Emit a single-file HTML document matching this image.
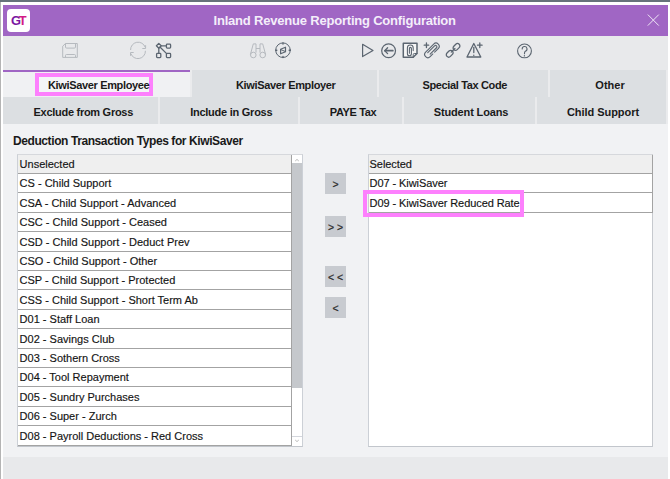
<!DOCTYPE html>
<html><head><meta charset="utf-8">
<style>
*{margin:0;padding:0;box-sizing:border-box}
html,body{width:670px;height:479px;overflow:hidden;background:#fff;font-family:"Liberation Sans",sans-serif}
.a{position:absolute}
.tb{position:absolute;background:#dcdfe2;font-weight:bold;font-size:11px;color:#1a1a1a;text-align:center;line-height:31px;letter-spacing:-0.35px;white-space:nowrap}
.row{position:absolute;left:0;width:274px;height:19.4px;border-bottom:1px solid #a3a3a3;font-size:11px;color:#141414;-webkit-text-stroke:0.15px #141414;line-height:18px;padding-top:0.4px;padding-left:1.6px;white-space:nowrap;overflow:hidden}
.btn{position:absolute;left:325px;width:21px;height:21px;background:#c8cbd0;font-size:10.5px;font-weight:normal;-webkit-text-stroke:0.2px #2a2a2a;color:#2a2a2a;text-align:center;line-height:23px}
</style></head><body>
<!-- frame -->
<div class="a" style="left:0;top:0;width:670px;height:2px;background:#66727b"></div>
<div class="a" style="left:0;top:2px;width:1px;height:477px;background:#b4b4b4"></div>
<!-- title bar -->
<div class="a" style="left:3px;top:5px;width:665px;height:31px;background:#a066c4"></div>
<div class="a" style="left:7px;top:9px;width:23px;height:23px;background:#fff;border-radius:4px"></div>
<div class="a" style="left:10.6px;top:13.2px;font-size:13.5px;font-weight:bold;line-height:16px;letter-spacing:-2.3px;transform:scaleX(0.95);transform-origin:0 0"><span style="color:#7a17a3">G</span><span style="color:#d21a86">T</span></div>
<div class="a" style="left:213.5px;top:13px;width:260px;font-size:13px;font-weight:bold;color:#f4eefa;line-height:16px;letter-spacing:-0.2px;white-space:nowrap">Inland Revenue Reporting Configuration</div>
<svg class="a" style="left:640px;top:8px" width="24" height="24" viewBox="640 8 24 24"><path d="M647.8,14.6 L658.8,25.6 M658.8,14.6 L647.8,25.6" stroke="#efe6f5" stroke-width="1"/></svg>
<!-- toolbar -->
<div class="a" style="left:3px;top:36px;width:665px;height:34px;background:#e8e9eb"></div>
<svg class="a" style="left:0;top:36px" width="670" height="34" viewBox="0 36 670 34">
<g fill="none" stroke="#b6babf" stroke-width="1" stroke-linejoin="round">
 <path d="M62.7,46.2 L65.5,43.5 L77.3,43.5 L77.3,57.4 L62.7,57.4 Z"/>
 <path d="M65.5,43.5 V47 Q65.5,48.1 66.6,48.1 H74.4 Q75.5,48.1 75.5,47 V43.5"/>
 <path d="M65.5,57.3 V55.5 Q65.5,54.5 66.5,54.5 H74.5 Q75.5,54.5 75.5,55.5 V57.3"/>
 <path d="M130.6,50 A7.5,7.5 0 0 1 145.2,47.3"/>
 <path d="M142.3,48.5 H145.6 V45.2"/>
 <path d="M145.4,50.8 A7.5,7.5 0 0 1 130.8,53.5"/>
 <path d="M133.7,52.5 H130.5 V55.8"/>
 <path d="M250.4,54.5 L253.3,43.9 H256 V52.6"/>
 <path d="M265.6,54.5 L262.7,43.9 H260 V52.6"/>
 <path d="M256,48.5 H260"/>
 <circle cx="253.3" cy="55" r="2.8"/>
 <circle cx="262.7" cy="55" r="2.8"/>
</g>
<g fill="none" stroke="#5b6570" stroke-width="1.3" stroke-linejoin="round" stroke-linecap="round">
 <path d="M158.8,43.4 L161.2,45.8 L158.8,48.2 L156.4,45.8 Z"/>
 <rect x="166.4" y="44.1" width="4.2" height="4" rx="0.8"/>
 <rect x="156.6" y="53.4" width="4.2" height="4.2" rx="0.8"/>
 <rect x="166.4" y="53.4" width="4.2" height="4.2" rx="0.8"/>
 <path d="M161.2,45.8 H166.4 M158.8,48.2 V53.4 M160.2,47.3 L166.6,53.6"/>
 <circle cx="283" cy="50.2" r="7.3" stroke-width="1"/>
 <path d="M280.6,49.2 L285.5,47.2 V51.8 L280.6,53.8 Z" stroke-width="1.2"/>
 <path d="M280.8,49.6 L285.3,51.5" stroke-width="1"/>
 <path d="M283,42.9 V44 M283,56.4 V57.5 M275.7,50.2 H276.8 M289.2,50.2 H290.3" stroke-width="1.4"/>
 <path d="M362.6,44.3 L373,50.4 L362.6,56.6 Z" stroke-width="1.2"/>
 <circle cx="388.6" cy="50.7" r="6.9" stroke-width="1.2"/>
 <path d="M385,50.7 H392.8" stroke-width="1.8"/>
 <path d="M387.6,47.8 L384.8,50.7 L387.6,53.6" stroke-width="1.3"/>
 <path d="M403.3,43.3 H417 V53.5 L413.2,57.3 H403.3 Z" stroke-width="1.5" fill="#f6f6f6"/>
 <path d="M413.2,57.3 V54.6 Q413.2,53.5 414.3,53.5 H417" stroke-width="1"/>
 <path d="M413.2,50.6 V47.9 A2.9,2.9 0 0 0 407.4,47.9 V53.8 A2,2 0 0 0 411.4,53.8 V48.4 A1,1 0 0 0 409.4,48.4 V53.2" stroke-width="1.1"/>
 <path d="M424.2,45.2 H428.7 M426.45,42.9 V47.5" stroke-width="1.3"/>
 <g transform="translate(432,50.3) rotate(45)">
  <path d="M3.2,-0.5 V-5.6 A3.2,3.2 0 0 0 -3.2,-5.6 V5.8 A3.2,3.2 0 0 0 3.2,5.8 V2 M1.4,4 V-5 A1.4,1.4 0 0 0 -1.4,-5 V4.6" stroke-width="1.1"/>
 </g>
 <g transform="translate(453.1,50.3) rotate(-45)">
  <rect x="-8.6" y="-2.4" width="7.6" height="4.8" rx="2.4" stroke-width="1.3"/>
  <rect x="1" y="-2.4" width="7.6" height="4.8" rx="2.4" stroke-width="1.3"/>
  <path d="M-2.6,0 H2.6" stroke-width="1.2"/>
 </g>
 <path d="M473.8,43.5 L480.8,57 H467 Z" stroke-width="1.3"/>
 <path d="M473.8,47.5 V52.5" stroke-width="1.3"/>
 <path d="M473.8,55 V55.4" stroke-width="1.2"/>
 <path d="M477.5,45.2 H482.1 M479.8,42.9 V47.5" stroke-width="1.3"/>
 <circle cx="524.5" cy="50.9" r="6.9" stroke-width="1.1"/>
 <path d="M522.2,49 A2.4,2.4 0 1 1 525.4,51.2 Q524.5,51.9 524.5,53 V53.8" stroke-width="1.1"/>
 <path d="M524.4,55.5 V56" stroke-width="1.2"/>
</g>
</svg>
<!-- tabs container -->
<div class="a" style="left:3px;top:70px;width:665px;height:54px;background:#eaebed"></div>
<div class="a" style="left:3px;top:70px;width:187px;height:27px;background:#f0f1f3"></div>
<div class="a" style="left:3px;top:70px;width:187px;height:2px;background:#a066c4"></div>
<div class="a" style="left:35.3px;top:73.3px;width:118px;height:23px;border:4px solid #fd80fd;background:#f4f5f7"></div>
<div class="a" style="left:48px;top:73px;font-weight:bold;font-size:11px;color:#1a1a1a;line-height:24px;letter-spacing:-0.35px;white-space:nowrap">KiwiSaver Employee</div>
<div class="tb" style="left:191.5px;top:70px;width:185.5px;height:27px;padding-left:3px">KiwiSaver Employer</div>
<div class="tb" style="left:379px;top:70px;width:169px;height:27px;padding-left:2.5px">Special Tax Code</div>
<div class="tb" style="left:550px;top:70px;width:116px;height:27px;padding-left:4px;letter-spacing:0">Other</div>
<div class="tb" style="left:3px;top:97px;width:154.5px;height:27px;padding-left:6px;letter-spacing:-0.28px">Exclude from Gross</div>
<div class="tb" style="left:159.5px;top:97px;width:138.5px;height:27px;padding-left:5px;letter-spacing:-0.25px">Include in Gross</div>
<div class="tb" style="left:300px;top:97px;width:102px;height:27px;padding-left:4px">PAYE Tax</div>
<div class="tb" style="left:404px;top:97px;width:131px;height:27px;padding-left:3px;letter-spacing:-0.15px">Student Loans</div>
<div class="tb" style="left:537px;top:97px;width:129px;height:27px;padding-left:3px;letter-spacing:-0.05px">Child Support</div>
<!-- content -->
<div class="a" style="left:3px;top:124px;width:665px;height:332.5px;background:#f1f2f4"></div>
<div class="a" style="left:3px;top:456.5px;width:665px;height:22.5px;background:#e8e9eb"></div>
<div class="a" style="left:13px;top:134px;font-size:12px;font-weight:bold;color:#1a1a1a;line-height:14px;letter-spacing:-0.41px;white-space:nowrap">Deduction Transaction Types for KiwiSaver</div>

<!-- left list -->
<div class="a" style="left:17px;top:153.6px;width:286px;height:293px;background:#fff;border:1px solid;border-color:#d6d8dc #ccd0d6 #c2c6cc #ccd0d6">
  <div class="row" style="top:0;background:#efefef;padding-top:0">Unselected</div>
  <div class="row" style="top:19.4px">CS - Child Support</div>
  <div class="row" style="top:38.8px">CSA - Child Support - Advanced</div>
  <div class="row" style="top:58.2px">CSC - Child Support - Ceased</div>
  <div class="row" style="top:77.6px">CSD - Child Support - Deduct Prev</div>
  <div class="row" style="top:97px">CSO - Child Support - Other</div>
  <div class="row" style="top:116.4px">CSP - Child Support - Protected</div>
  <div class="row" style="top:135.8px">CSS - Child Support - Short Term Ab</div>
  <div class="row" style="top:155.2px">D01 - Staff Loan</div>
  <div class="row" style="top:174.6px">D02 - Savings Club</div>
  <div class="row" style="top:194px">D03 - Sothern Cross</div>
  <div class="row" style="top:213.4px">D04 - Tool Repayment</div>
  <div class="row" style="top:232.8px">D05 - Sundry Purchases</div>
  <div class="row" style="top:252.2px">D06 - Super - Zurch</div>
  <div class="row" style="top:271.6px">D08 - Payroll Deductions - Red Cross</div>
  <div class="a" style="left:273px;top:0;width:1px;height:291px;background:#a3a3a3"></div>
  <!-- scrollbar -->
  <div class="a" style="left:274px;top:0;width:10px;height:291px;background:#fff"></div>
  <div class="a" style="left:274px;top:8.7px;width:10px;height:225.2px;background:#c5c8cc"></div>
  <div class="a" style="left:274px;top:281.4px;width:10px;height:1px;background:#d3d6dc"></div>
  <svg class="a" style="left:275px;top:2px" width="8" height="6" viewBox="0 0 8 6"><path d="M2.2 4L4 2.4L5.8 4" stroke="#a8a8a8" stroke-width="0.8" fill="none"/></svg>
  <svg class="a" style="left:275px;top:283.5px" width="8" height="6" viewBox="0 0 8 6"><path d="M2.2 2L4 3.6L5.8 2" stroke="#a8a8a8" stroke-width="0.8" fill="none"/></svg>
</div>

<!-- buttons -->
<div class="btn" style="top:173px">&gt;</div>
<div class="btn" style="top:216px">&gt; &gt;</div>
<div class="btn" style="top:266px">&lt; &lt;</div>
<div class="btn" style="top:297px">&lt;</div>

<!-- right list -->
<div class="a" style="left:368px;top:153.6px;width:285px;height:293px;background:#fff;border:1px solid;border-color:#d6d8dc #c6c9ce #c2c6cc #ccd0d6">
  <div class="row" style="top:0;width:283px;background:#efefef;padding-top:0;padding-left:0.6px;letter-spacing:-0.08px">Selected</div>
  <div class="row" style="top:19.4px;width:283px;padding-left:0.6px;letter-spacing:-0.08px">D07 - KiwiSaver</div>
  <div class="row" style="top:38.8px;width:283px;padding-left:0.6px;letter-spacing:-0.08px">D09 - KiwiSaver Reduced Rate</div>
  <div class="a" style="left:283px;top:0;width:1px;height:58.2px;background:#a3a3a3"></div>
</div>
<div class="a" style="left:363.3px;top:190px;width:160.7px;height:26.5px;border:4px solid #fd80fd"></div>

</body></html>
